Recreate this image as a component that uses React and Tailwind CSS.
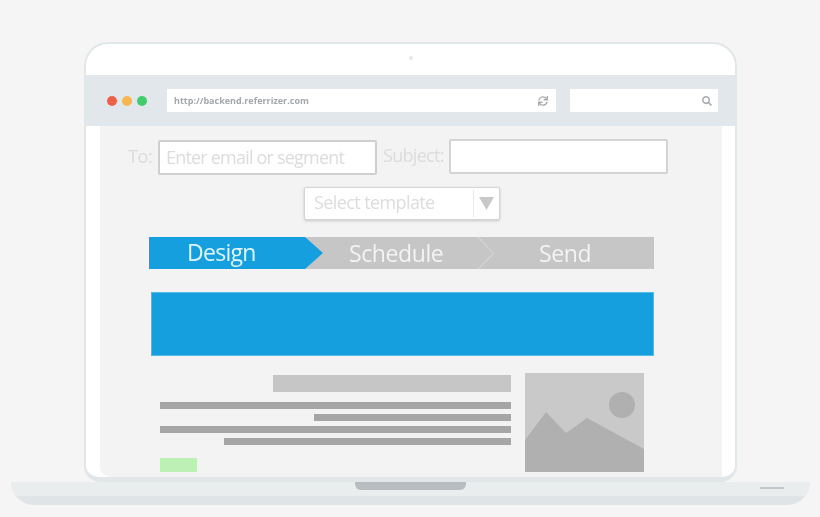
import { FaSearch, FaSync } from "react-icons/fa";

const textLines = [
  "w-full mt-[10px]",
  "w-[197px] mt-[5px]",
  "w-full mt-[5px]",
  "w-[287px] mt-[5px]",
];

function BrowserBar() {
  return (
    <div className="-mx-px h-[51px] bg-[#e1e7ea] flex items-center pl-[22px]">
      {/* Traffic lights */}
      <div className="flex gap-[5px] w-[60px]">
        <span className="w-[10px] h-[10px] rounded-full bg-[#ee6149]" />
        <span className="w-[10px] h-[10px] rounded-full bg-[#f9b54f]" />
        <span className="w-[10px] h-[10px] rounded-full bg-[#43cb6e]" />
      </div>
      <div className="w-[389px] h-[23px] bg-white rounded-[1px] flex items-center justify-between pl-[7px] pr-[8px]">
        <span className="font-['Open_Sans',sans-serif] font-bold text-[9px] text-[#a3a8ab]">http://backend.referrizer.com</span>
        <FaSync className="text-[#a9adaf] text-[10px]" />
      </div>
      <div className="ml-[14px] w-[148px] h-[23px] bg-white rounded-[1px] flex items-center justify-end pr-[6px]">
        <FaSearch className="text-[#a9adaf] text-[10px]" />
      </div>
    </div>
  );
}

function Stepper() {
  return (
    <div className="relative mt-[17px] ml-[49px] w-[505px] h-[32px] bg-[#c6c6c6] flex text-[23px] leading-[32px] tracking-[-0.4px]">
      <div className="w-[174px] bg-[#159fdf] text-[#dff6ff] pl-[38px] leading-[30px] tracking-[-0.7px] [clip-path:polygon(0_0,156px_0,174px_50%,156px_100%,0_100%)]">Design</div>
      <div className="w-[156px] pl-[26px] text-[#f3f3f3]">Schedule</div>
      <div className="pl-[60px] text-[#f3f3f3]">Send</div>
      <svg className="absolute left-[328px] top-0" width="18" height="32" viewBox="0 0 18 32" fill="none">
        <path d="M1 0L16.500 16.500L1 32" stroke="#dcdcdc" strokeWidth="1" />
      </svg>
    </div>
  );
}

export default function App() {
  return (
    <div className="w-[820px] h-[517px] overflow-hidden bg-[#f5f5f5] pt-[42px] font-['Open_Sans',sans-serif] blur-[0.5px]">
      {/* Screen */}
      <div className="ml-[84px] w-[653px] h-[440px] bg-white border-x-2 border-t-2 border-b-[5px] border-[#e1e6e9] rounded-t-[24px] rounded-b-[16px] overflow-hidden">
        <div className="h-[31px] flex justify-center items-center">
          <span className="w-[4px] h-[4px] rounded-full bg-[#e1e7ea] -translate-y-[2px]" />
        </div>
        <BrowserBar />

        <div className="ml-[14px] w-[622px] h-[351px] bg-[#f3f3f3] rounded-bl-[10px] pt-[14px]">
          {/* Recipient row */}
          <div className="flex h-[35px] pl-[28px] text-[18px] tracking-[-0.4px] text-[#dcdcdc]">
            <span className="w-[22px] leading-[33px]">To:</span>
            <div className="ml-[8px] w-[219px] h-[35px] bg-white border-2 border-[#cfcfcf] rounded-[2px] pl-[6px] leading-[30px] tracking-[-0.8px]">Enter email or segment</div>
            <span className="w-[62px] ml-[6px] leading-[31px] tracking-[-0.7px]">Subject:</span>
            <div className="ml-[4px] w-[219px] h-[35px] -mt-px bg-white border-2 border-[#d4d4d4] rounded-[2px]" />
          </div>

          {/* Template select */}
          <div className="mt-[12px] ml-[204px] w-[196px] h-[33px] bg-white border border-[#d4d4d4] rounded-[2px] shadow-[0_1px_3px_rgba(0,0,0,0.18)] flex items-center text-[18px] tracking-[-0.6px] text-[#dcdcdc]">
            <span className="w-[168px] pl-[9px] pb-[2px]">Select template</span>
            <span className="h-[27px] border-l border-[#e8e8e8] flex items-center pl-[5px]">
              <svg width="15" height="13" viewBox="0 0 15 13"><path d="M0 0H15L7.500 13Z" fill="#c8c8c8" /></svg>
            </span>
          </div>

          <Stepper />

          {/* Header banner */}
          <div className="mt-[23px] ml-[51px] w-[503px] h-[64px] bg-[#159fdf] border border-[#55b9e8]" />

          {/* Email body */}
          <div className="mt-[17px] ml-[60px] flex">
            <div className="w-[351px] flex flex-col items-end">
              <div className="mt-[2px] w-[238px] h-[17px] bg-[#c6c6c6]" />
              {textLines.map((c) => (
                <div key={c} className={`${c} h-[7px] bg-[#a6a6a6]`} />
              ))}
              <div className="self-start mt-[13px] w-[37px] h-[14px] bg-[#bdf0b4]" />
            </div>
            <svg className="ml-[14px]" width="119" height="99" viewBox="0 0 119 99">
              <rect width="119" height="99" fill="#c9c9c9" />
              <circle cx="97" cy="32" r="13" fill="#b0b0b0" />
              <path d="M0 67L21 39L41 60L62 45L119 76V99H0Z" fill="#b0b0b0" />
            </svg>
          </div>
        </div>
      </div>

      {/* Base */}
      <div className="ml-[11px] w-[799px] h-[23px] bg-[#dfe4e6] rounded-b-[24px] overflow-hidden">
        <div className="h-[14px] bg-[#e9edee] relative flex justify-center">
          <div className="w-[111px] h-[8px] bg-[#b9bdc1] rounded-b-[6px]" />
          <div className="absolute right-[26px] top-[5px] w-[24px] h-[2px] bg-[#c3c7c9]" />
        </div>
      </div>
    </div>
  );
}
